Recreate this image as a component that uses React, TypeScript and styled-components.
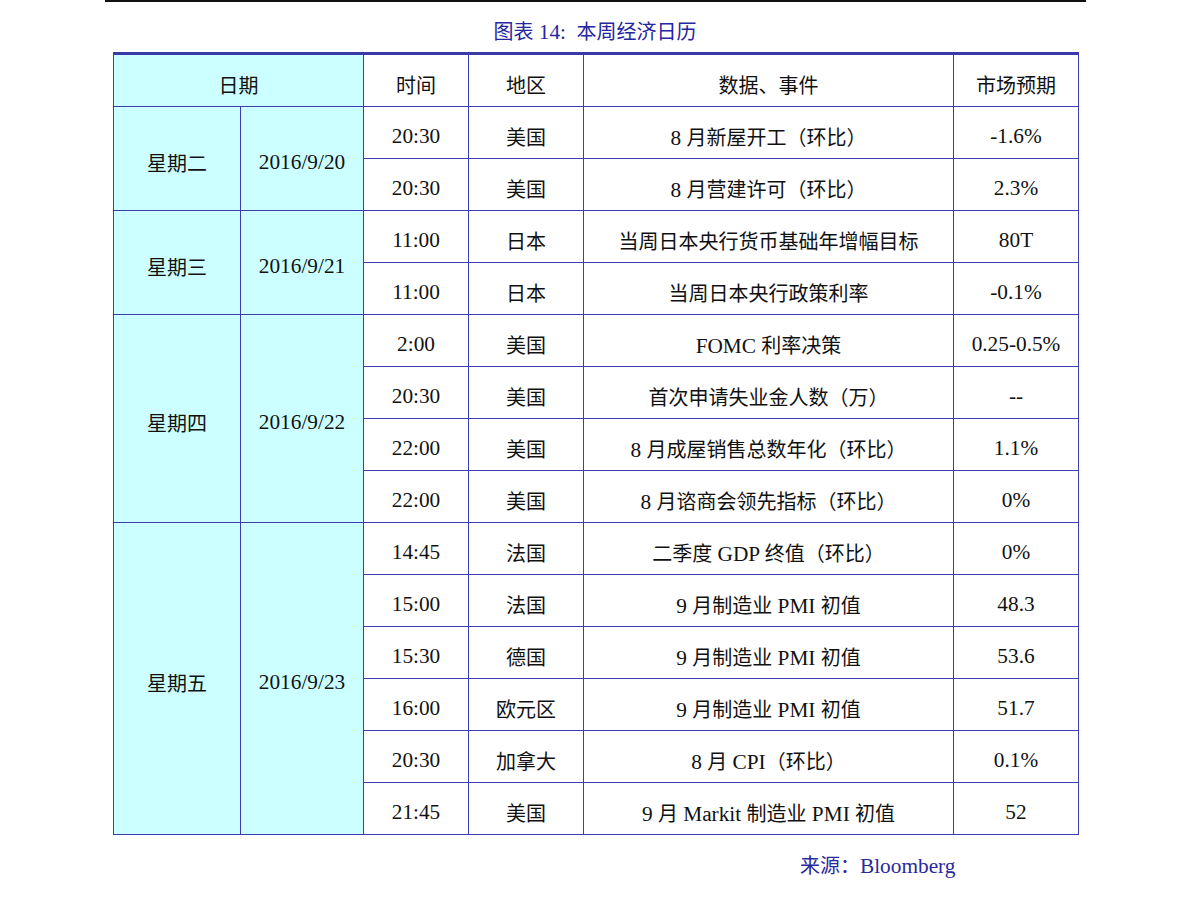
import React from "react";
import styled, { createGlobalStyle } from "styled-components";

const Global = createGlobalStyle`
  html, body { margin: 0; padding: 0; background: #fff; }
  body { font-family: "Liberation Serif", "Noto Sans CJK SC", serif; color: #111; }
`;

const Page = styled.div`
  width: 1191px;
  height: 897px;
  display: flex;
  flex-direction: column;
  align-items: flex-start;
`;

const TopRule = styled.div`
  margin-left: 105px;
  width: 981px;
  height: 2px;
  background: #111;
`;

const Title = styled.div`
  width: 964px;
  margin-left: 113px;
  margin-top: 17px;
  height: 29px;
  text-align: center;
  font-size: 20px;
  line-height: 26px;
  white-space: pre;
  color: #2626a0;
`;

const Table = styled.table`
  margin-left: 113px;
  margin-top: 4px;
  width: 965px;
  border-collapse: collapse;
  table-layout: fixed;
  border-top: 3px solid #3a3aa8;
`;

const Cell = styled.td<{ $cyan?: boolean }>`
  height: 43px;
  padding: 8px 0 0 0;
  text-align: center;
  vertical-align: middle;
  font-size: 20px;
  font-weight: normal;
  color: #111;
  border: 1px solid #3d3db3;
  background: ${(p) => (p.$cyan ? "#ccffff" : "#ffffff")};
`;

const HeadCell = styled(Cell).attrs({ as: "th" })``;

const Latin = styled.span`
  font-size: 21.3px;
`;

const Source = styled.div`
  margin-left: 800px;
  margin-top: 15px;
  font-size: 20px;
  color: #2a2a9c;
`;

function Mixed({ text }: { text: string }) {
  const parts = text.split(/([\x20-\x7E]+)/).filter((s) => s.length > 0);
  return (
    <>
      {parts.map((p, i) =>
        /^[\x20-\x7E]+$/.test(p) ? <Latin key={i}>{p}</Latin> : <React.Fragment key={i}>{p}</React.Fragment>
      )}
    </>
  );
}

type Row = { time: string; region: string; event: string; exp: string };
type Day = { day: string; date: string; rows: Row[] };

const data: Day[] = [
  {
    day: "星期二",
    date: "2016/9/20",
    rows: [
      { time: "20:30", region: "美国", event: "8 月新屋开工（环比）", exp: "-1.6%" },
      { time: "20:30", region: "美国", event: "8 月营建许可（环比）", exp: "2.3%" },
    ],
  },
  {
    day: "星期三",
    date: "2016/9/21",
    rows: [
      { time: "11:00", region: "日本", event: "当周日本央行货币基础年增幅目标", exp: "80T" },
      { time: "11:00", region: "日本", event: "当周日本央行政策利率", exp: "-0.1%" },
    ],
  },
  {
    day: "星期四",
    date: "2016/9/22",
    rows: [
      { time: "2:00", region: "美国", event: "FOMC 利率决策", exp: "0.25-0.5%" },
      { time: "20:30", region: "美国", event: "首次申请失业金人数（万）", exp: "--" },
      { time: "22:00", region: "美国", event: "8 月成屋销售总数年化（环比）", exp: "1.1%" },
      { time: "22:00", region: "美国", event: "8 月谘商会领先指标（环比）", exp: "0%" },
    ],
  },
  {
    day: "星期五",
    date: "2016/9/23",
    rows: [
      { time: "14:45", region: "法国", event: "二季度 GDP 终值（环比）", exp: "0%" },
      { time: "15:00", region: "法国", event: "9 月制造业 PMI 初值", exp: "48.3" },
      { time: "15:30", region: "德国", event: "9 月制造业 PMI 初值", exp: "53.6" },
      { time: "16:00", region: "欧元区", event: "9 月制造业 PMI 初值", exp: "51.7" },
      { time: "20:30", region: "加拿大", event: "8 月 CPI（环比）", exp: "0.1%" },
      { time: "21:45", region: "美国", event: "9 月 Markit 制造业 PMI 初值", exp: "52" },
    ],
  },
];

export default function App() {
  return (
    <Page>
      <Global />
      <TopRule />
      <Title>
        <Mixed text="图表 14:  本周经济日历" />
      </Title>
      <Table>
        <colgroup>
          <col style={{ width: 127 }} />
          <col style={{ width: 123 }} />
          <col style={{ width: 105 }} />
          <col style={{ width: 115 }} />
          <col style={{ width: 370 }} />
          <col style={{ width: 125 }} />
        </colgroup>
        <thead>
          <tr>
            <HeadCell $cyan colSpan={2}>日期</HeadCell>
            <HeadCell>时间</HeadCell>
            <HeadCell>地区</HeadCell>
            <HeadCell>数据、事件</HeadCell>
            <HeadCell>市场预期</HeadCell>
          </tr>
        </thead>
        <tbody>
          {data.map((d) =>
            d.rows.map((r, i) => (
              <tr key={d.day + i}>
                {i === 0 && (
                  <>
                    <Cell $cyan rowSpan={d.rows.length}>{d.day}</Cell>
                    <Cell $cyan rowSpan={d.rows.length}>
                      <Mixed text={d.date} />
                    </Cell>
                  </>
                )}
                <Cell>
                  <Mixed text={r.time} />
                </Cell>
                <Cell>{r.region}</Cell>
                <Cell>
                  <Mixed text={r.event} />
                </Cell>
                <Cell>
                  <Mixed text={r.exp} />
                </Cell>
              </tr>
            ))
          )}
        </tbody>
      </Table>
      <Source>
        <Mixed text="来源：Bloomberg" />
      </Source>
    </Page>
  );
}
